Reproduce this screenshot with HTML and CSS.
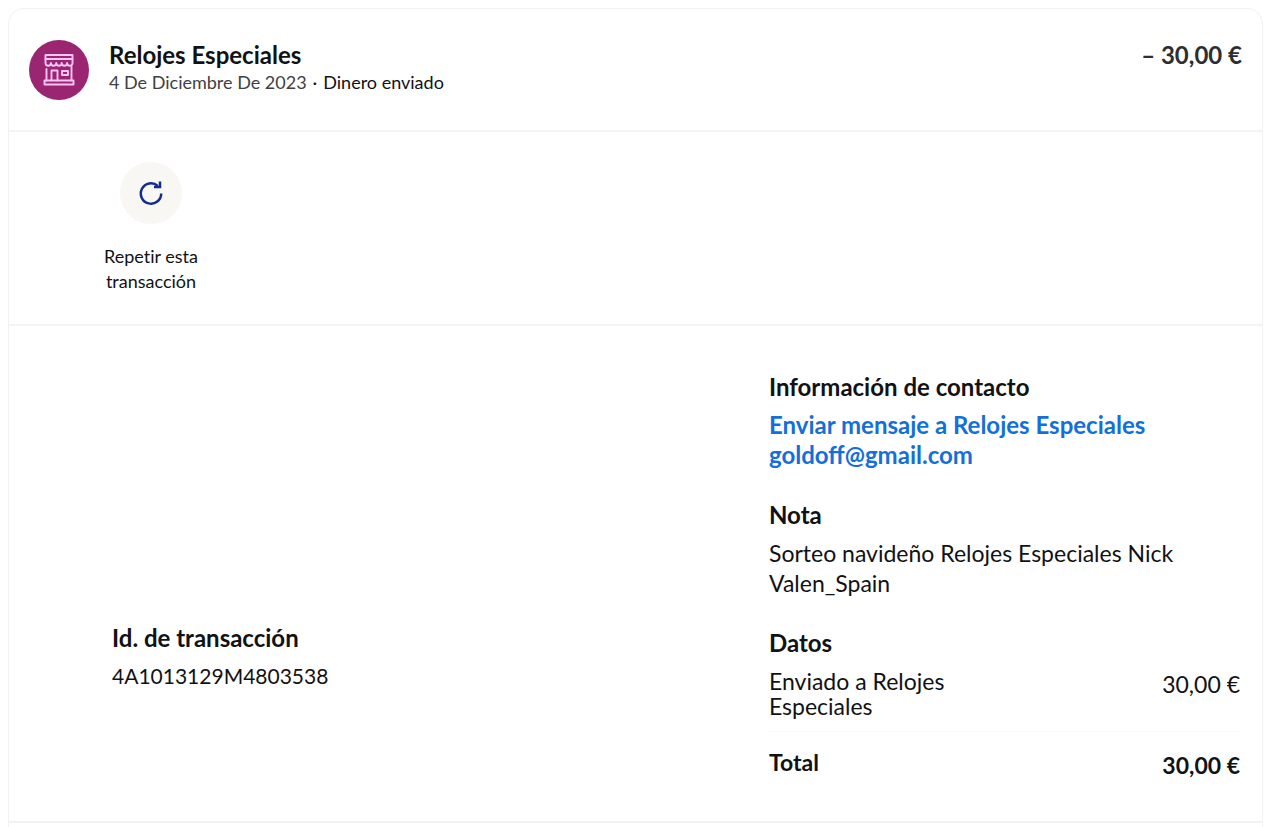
FILE: index.html
```html
<!DOCTYPE html>
<html lang="es">
<head>
<meta charset="utf-8">
<meta name="viewport" content="width=device-width, initial-scale=1">
<title>Relojes Especiales</title>
<link rel="stylesheet" href="styles.css">
</head>
<body>
<main class="card">
  <header class="summary">
    <svg class="avatar" viewBox="0 0 60 60" aria-hidden="true">
      <circle cx="30" cy="30" r="30" fill="#9a2672"/>
      <g fill="none" stroke="#fbc4f4" stroke-width="1.9" stroke-linejoin="round" stroke-linecap="round">
        <path d="M16.500 15h27v4h-27z"/>
        <path d="M16.500 19v4a2.700 2.700 0 0 0 5.400 0a2.700 2.700 0 0 0 5.400 0a2.700 2.700 0 0 0 5.400 0a2.700 2.700 0 0 0 5.400 0a2.700 2.700 0 0 0 5.400 0v-4"/>
        <path d="M17.500 29v11.500M42.500 26v14.500"/>
        <path d="M22.500 40.500v-10h6v10M33 31h6v4h-6z"/>
        <path d="M15.500 40.500h29v4h-29z"/>
      </g>
    </svg>
    <div class="summary-text">
      <h1 class="payee">Relojes Especiales</h1>
      <p class="meta"><span class="date">4 De Diciembre De 2023</span><span>·</span><span>Dinero enviado</span></p>
    </div>
    <p class="amount">– 30,00 €</p>
  </header>

  <section class="actions">
    <button class="repeat" type="button">
      <span class="repeat-icon">
        <svg viewBox="0 0 26 26" width="26" height="26" aria-hidden="true">
          <path d="M23.200 13.500a10.200 10.200 0 1 1-3.400-7.600" fill="none" stroke="#142c8e" stroke-width="2.500"/>
          <path d="M22 1.500v5.500h-6" fill="none" stroke="#142c8e" stroke-width="2.500"/>
        </svg>
      </span>
      <span>Repetir esta transacción</span>
    </button>
  </section>

  <section class="details">
    <div class="transaction">
      <h2 class="label">Id. de transacción</h2>
      <p class="value code">4A1013129M4803538</p>
    </div>
    <div class="info">
      <section>
        <h2 class="label">Información de contacto</h2>
        <p class="value"><a class="link" href="#mensaje">Enviar mensaje a Relojes Especiales</a></p>
        <p class="value"><a class="link" href="mailto:goldoff@gmail.com">goldoff@gmail.com</a></p>
      </section>
      <section>
        <h2 class="label">Nota</h2>
        <p class="value">Sorteo navideño Relojes Especiales Nick Valen_Spain</p>
      </section>
      <section>
        <h2 class="label">Datos</h2>
        <dl class="lines">
          <div class="line"><dt>Enviado a Relojes Especiales</dt><dd>30,00 €</dd></div>
          <div class="line total"><dt>Total</dt><dd>30,00 €</dd></div>
        </dl>
      </section>
    </div>
  </section>
</main>
</body>
</html>
```
FILE: styles.css
```css
* { box-sizing: border-box; }
body {
  margin: 0;
  padding: 8px 17px 0 8px;
  background: #fff;
  color: #111214;
  font-family: Lato, "Noto Sans", sans-serif;
  font-size: 23px;
  line-height: 30px;
}
h1, h2, p, dl, dd { margin: 0; font-size: inherit; }
.card {
  min-height: calc(100vh - 8px);
  border: 1px solid #f2f2f2;
  border-bottom: 0;
  border-radius: 16px 16px 0 0;
}
.summary {
  display: flex;
  align-items: flex-start;
  padding: 31px 20px 30px;
  border-bottom: 2px solid #f4f4f4;
}
.avatar { flex: none; width: 60px; height: 60px; margin-right: 20px; }
.summary-text { flex: 1; }
.payee, .amount, .label, .link { font-size: 24px; font-weight: 700; }
.meta {
  display: flex;
  gap: 6px;
  font-size: 18px;
  line-height: 24px;
}
.date { color: #3f4144; }
.amount { color: #2c2e30; }
.actions {
  padding: 30px 84px;
  border-bottom: 2px solid #f4f4f4;
}
.repeat {
  display: flex;
  flex-direction: column;
  align-items: center;
  gap: 20px;
  width: 116px;
  padding: 0;
  border: 0;
  background: none;
  color: inherit;
  font: inherit;
  font-size: 18px;
  font-variant-ligatures: none;
  line-height: 25px;
  cursor: pointer;
}
.repeat-icon {
  display: grid;
  place-items: center;
  width: 62px;
  height: 62px;
  border-radius: 50%;
  background: #f8f7f3;
}
.details {
  display: grid;
  grid-template-columns: 657fr 471fr;
  padding: 46px 22px 43px 103px;
  border-bottom: 2px solid #f2f2f2;
}
.transaction { padding-top: 251px; }
.info { display: grid; gap: 30px; }
.label { margin-bottom: 8px; }
.value { line-height: 30px; }
.code { font-size: 21px; }
.link { display: block; color: #146fd8; text-decoration: none; }
.line {
  display: flex;
  justify-content: space-between;
  line-height: 25px;
  padding: 3px 0 12px;
}
.line dt { width: 200px; }
.line dd { padding-top: 3px; }
.total {
  padding: 18px 0 0;
  border-top: 1px solid #fafafa;
  font-weight: 700;
}
```
